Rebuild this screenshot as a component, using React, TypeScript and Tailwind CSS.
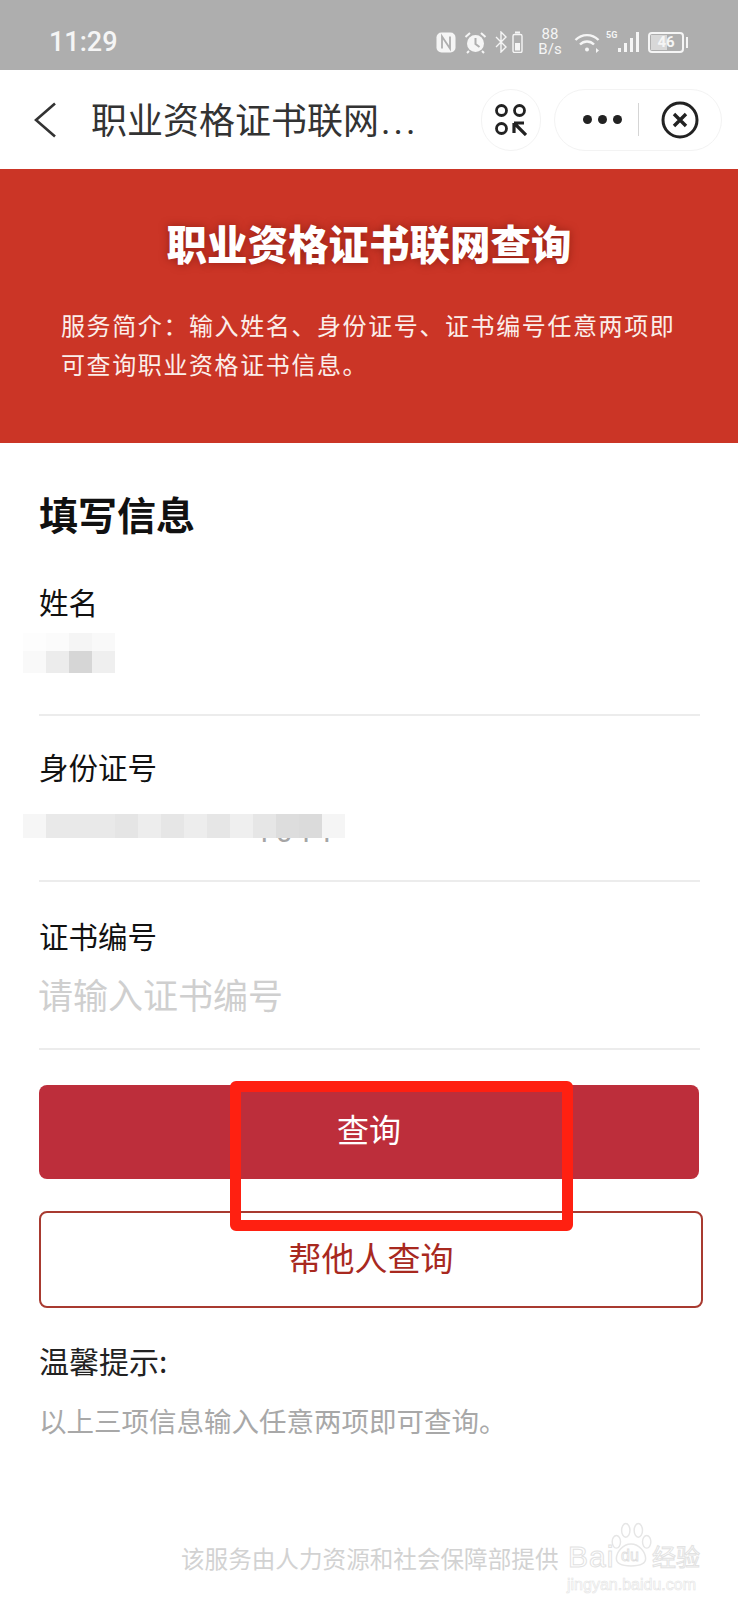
import type { ReactNode } from "react";

const cjk = "font-['Noto_Sans_CJK_SC',sans-serif]";

const nameMosaic = [
  ["bg-[#fdfdfd]", "bg-[#fbfbfb]", "bg-[#f5f5f5]", "bg-[#f9f9f9]"],
  ["bg-[#f9f9f9]", "bg-[#ececec]", "bg-[#d6d6d6]", "bg-[#efefef]"],
];

const idMosaic = [
  "bg-[#f6f6f6]",
  "bg-[#e9e9e9]",
  "bg-[#e9e9e9]",
  "bg-[#e9e9e9]",
  "bg-[#e5e5e5]",
  "bg-[#ededed]",
  "bg-[#e6e6e6]",
  "bg-[#ededed]",
  "bg-[#e6e6e6]",
  "bg-[#efefef]",
  "bg-[#e6e6e6]",
  "bg-[#dddddd]",
  "bg-[#dbdbdb]",
  "bg-[#f5f5f5]",
];

const StatusIcons = () => (
  <div className="flex items-center text-[#f5f5f5] font-['Roboto',sans-serif]">
    {/* nfc */}
    <svg width="20" height="21" viewBox="0 0 20 21" fill="none">
      <rect x="0.5" y="0.5" width="19" height="20" rx="5" fill="currentColor" />
      <path d="M6 16.5V4.5l8 12V4.5" strokeWidth="1.8" stroke="#aeaeae" />
    </svg>
    {/* alarm */}
    <svg className="ml-[8px]" width="23" height="23" viewBox="0 0 23 23" fill="none">
      <circle cx="11.5" cy="12.5" r="8.5" fill="currentColor" />
      <path d="M11.5 7v6l4 3" stroke="#aeaeae" strokeWidth="2" />
      <path d="M1.5 6 6 2M21.5 6 17 2M5 20l-2 2M18 20l2 2" stroke="currentColor" strokeWidth="2" />
    </svg>
    {/* bluetooth */}
    <svg className="ml-[8px]" width="12" height="22" viewBox="0 0 12 22" fill="none" stroke="currentColor" strokeWidth="1.4">
      <path d="M1 6l10 10-5 5V1l5 5L1 16" />
    </svg>
    {/* vibrate / device battery */}
    <svg className="ml-[5px]" width="11" height="22" viewBox="0 0 11 22" fill="none">
      <rect x="3" y="0.5" width="5" height="2" fill="currentColor" />
      <rect x="1" y="3.5" width="9" height="18" rx="1.5" stroke="currentColor" strokeWidth="1.4" />
      <rect x="3" y="12" width="5" height="7.5" fill="currentColor" />
    </svg>
    <div className="ml-[15px] w-[24px] flex flex-col items-center text-[15px] leading-[15px]">
      <span>88</span>
      <span>B/s</span>
    </div>
    {/* wifi */}
    <svg className="ml-[12px]" width="26" height="21" viewBox="0 0 26 21" fill="none" stroke="currentColor" strokeWidth="2.4">
      <path d="M1.5 8C8 1.5 18 1.5 24.5 8" />
      <path d="M6 12.5c4-4 10-4 14 0" />
      <circle cx="13" cy="17.5" r="2" fill="currentColor" stroke="none" />
      <path d="M22 16l3 2.5-3 2.5z" fill="currentColor" stroke="none" />
    </svg>
    <span className="ml-[6px] mb-[13px] w-[11px] text-[9px] leading-[9px] font-bold">5G</span>
    {/* signal */}
    <svg width="22" height="22" viewBox="0 0 22 22" fill="currentColor">
      <rect x="1" y="17" width="3" height="4" />
      <rect x="7" y="12" width="3" height="9" />
      <rect x="13" y="7" width="3" height="14" />
      <rect x="19" y="1" width="3" height="20" />
    </svg>
    {/* battery */}
    <div className="ml-[9px] relative w-[36px] h-[21px] rounded-[4px] border-2 border-[#f5f5f5] flex items-center justify-center">
      <div className="absolute left-[1px] top-[1px] bottom-[1px] w-[16px] bg-[#d8d8d8]" />
      <span className="relative text-[15px] leading-none font-bold">46</span>
    </div>
    <div className="ml-[2px] w-[2px] h-[11px] bg-[#f5f5f5]" />
  </div>
);

const Field = ({ label, className, children }: { label: string; className?: string; children: ReactNode }) => (
  <div className={`border-b-2 border-[#ececec] ${className ?? ""}`}>
    <div className="h-[40px] leading-[40px] text-[29.5px] text-[#111]">{label}</div>
    {children}
  </div>
);

export default function App() {
  return (
    <div className={`relative w-[738px] h-[1600px] overflow-hidden bg-white flex flex-col ${cjk}`}>
      {/* status bar */}
      <div className="h-[70px] shrink-0 bg-[#aeaeae] flex items-center justify-between pl-[49px] pr-[50px] pt-[14px]">
        <span className="text-[27px] font-medium leading-none text-[#f5f5f5] font-['Roboto',sans-serif]">11:29</span>
        <StatusIcons />
      </div>

      {/* nav */}
      <div className="h-[99px] shrink-0 flex items-center pl-[34px] pr-[16px] text-[#333]">
        <svg width="22" height="36" viewBox="0 0 22 36" fill="none" stroke="#333" strokeWidth="2.6">
          <path d="M21 1.5 2 18l19 16.5" />
        </svg>
        <div className="ml-[35px] w-[332px] text-[36px] leading-none whitespace-nowrap flex items-baseline">
          职业资格证书联网<span className="ml-[2px] tracking-[3px] font-['Roboto',sans-serif]">...</span>
        </div>
        <div className="ml-auto w-[60px] h-[62px] rounded-full border border-[#f3f3f3] flex items-center justify-center">
          <svg width="32" height="32" viewBox="0 0 32 32" fill="none" stroke="#222" strokeWidth="2.8">
            <circle cx="6.5" cy="6.5" r="5" />
            <circle cx="24.5" cy="6.5" r="5" />
            <circle cx="6.5" cy="24.5" r="5" />
            <path d="M19 19h10M19 19v10M19.5 19.5 31 31" strokeWidth="3.2" />
          </svg>
        </div>
        <div className="ml-[13px] w-[168px] h-[62px] rounded-full border border-[#f3f3f3] flex items-center">
          <div className="w-[67px] flex justify-end gap-[6px]">
            <div className="w-[9px] h-[9px] rounded-full bg-[#222]" />
            <div className="w-[9px] h-[9px] rounded-full bg-[#222]" />
            <div className="w-[9px] h-[9px] rounded-full bg-[#222]" />
          </div>
          <div className="ml-[16px] w-px h-[33px] bg-[#d5d5d5]" />
          <svg className="ml-[22px]" width="38" height="38" viewBox="0 0 38 38" fill="none" stroke="#222">
            <circle cx="19" cy="19" r="17" strokeWidth="3" />
            <path d="M13 13l12 12M25 13 13 25" strokeWidth="3.4" />
          </svg>
        </div>
      </div>

      {/* banner */}
      <div className="h-[274px] shrink-0 bg-[#cb3526] text-white flex flex-col">
        <h1 className="mt-[46px] h-[56px] leading-[56px] text-center text-[40.5px] font-black [text-shadow:0_0_8px_rgba(110,20,10,0.6)]">
          职业资格证书联网查询
        </h1>
        <p className="mt-[34px] mx-[61px] text-[24px] leading-[39px] tracking-[1.6px] text-[#fbeeea]">
          服务简介：输入姓名、身份证号、证书编号任意两项即可查询职业资格证书信息。
        </p>
      </div>

      {/* form */}
      <div className="flex-1 pl-[39px] pr-[38px]">
        <h2 className="mt-[48px] mb-[46px] h-[44px] leading-[44px] text-[39px] font-bold text-[#111]">填写信息</h2>

        <Field label="姓名">
          <div className="relative h-[93px]">
            <div className="absolute left-[-16px] top-[12px] grid grid-cols-[repeat(4,23px)] grid-rows-[18px_22px]">
              {nameMosaic.flat().map((c, i) => (
                <div key={i} className={c} />
              ))}
            </div>
          </div>
        </Field>

        <Field label="身份证号" className="pt-[30px]">
          <div className="relative h-[94px]">
            <div className="absolute left-[216px] top-[26px] text-[30px] leading-[40px] tracking-[4px] text-[#a5a5a5] font-['Roboto',sans-serif]">1011</div>
            <div className="absolute left-[-16px] top-[28px] flex">
              {idMosaic.map((c, i) => (
                <div key={i} className={`w-[23px] h-[24px] ${c}`} />
              ))}
            </div>
          </div>
        </Field>

        <Field label="证书编号" className="pt-[33px]">
          <div className="h-[93px] pb-[15px] flex items-center text-[35px] text-[#cfcfcf] ml-[-1px]">请输入证书编号</div>
        </Field>

        <button className="mt-[35px] w-[660px] h-[94px] rounded-[8px] bg-[#bd2e3b] text-white text-[32px] pb-[8px] flex items-center justify-center">
          查询
        </button>
        <button className="mt-[32px] w-[664px] h-[97px] rounded-[8px] border-2 border-[#a83a30] bg-white text-[#a8291f] text-[33px] pb-[3px] flex items-center justify-center">
          帮他人查询
        </button>

        <div className="mt-[32px] h-[40px] leading-[40px] text-[30px] text-[#222]">温馨提示:</div>
        <div className="mt-[20px] h-[40px] leading-[40px] text-[27.5px] text-[#a8a8a8]">以上三项信息输入任意两项即可查询。</div>
      </div>

      <div className="h-[59px] shrink-0 pl-[181px] text-[23.6px] leading-[34px] text-[#d2d2d2]">该服务由人力资源和社会保障部提供</div>

      {/* annotation drawn over the screenshot */}
      <div className="absolute left-[230px] top-[1081px] w-[343px] h-[150px] rounded-[6px] border-[11px] border-[#ff2011]" />

      {/* watermark */}
      <div className="absolute left-[567px] top-[1522px] w-[140px] h-[72px]">
        <svg className="absolute left-[43px] top-[0px]" width="42" height="46" viewBox="0 0 40 44" fill="none" stroke="#e6e6e6" strokeWidth="1.4">
          <ellipse cx="6" cy="19" rx="4" ry="6" />
          <ellipse cx="15" cy="8" rx="4" ry="6.5" />
          <ellipse cx="27" cy="8" rx="4" ry="6.5" />
          <ellipse cx="35" cy="19" rx="4" ry="6" />
          <path d="M20 21c-8 0-14 8-14 14 0 5 5 7 14 7s14-2 14-7c0-6-6-14-14-14z" />
        </svg>
        <span className="absolute left-[1px] top-[20px] text-[30px] leading-[30px] tracking-[1px] font-['Liberation_Sans',sans-serif] text-transparent [-webkit-text-stroke:1px_#e2e2e2]">Bai</span>
        <span className="absolute left-[54px] top-[25px] text-[16px] leading-[18px] font-['Liberation_Sans',sans-serif] text-transparent [-webkit-text-stroke:0.8px_#dedede]">du</span>
        <span className="absolute left-[85px] top-[20px] text-[24px] leading-[28px] whitespace-nowrap text-transparent [-webkit-text-stroke:1px_#e2e2e2]">经验</span>
        <span className="absolute left-[0px] top-[54px] text-[16px] leading-[18px] whitespace-nowrap font-['Liberation_Sans',sans-serif] text-transparent [-webkit-text-stroke:0.6px_#e4e4e4]">jingyan.baidu.com</span>
      </div>
    </div>
  );
}
